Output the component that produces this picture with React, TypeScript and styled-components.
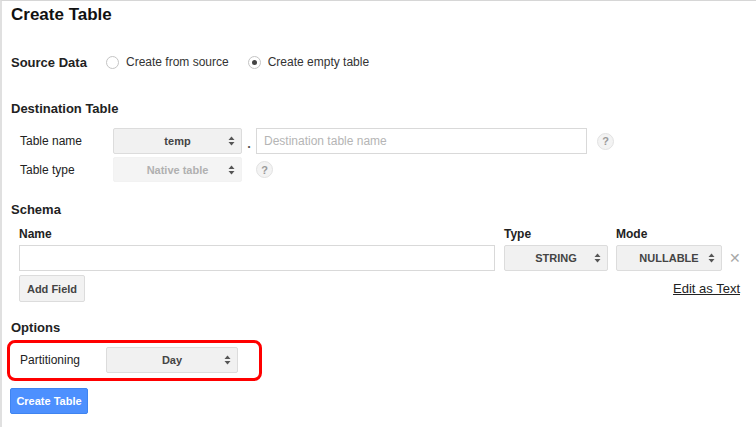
import React from "react";
import styled, { createGlobalStyle } from "styled-components";

const GlobalStyle = createGlobalStyle`
  html, body {
    margin: 0;
    padding: 0;
    background: #ffffff;
  }
  body {
    font-family: "Liberation Sans", Arial, sans-serif;
    color: #222222;
  }
`;

const Page = styled.div`
  width: 756px;
  height: 427px;
  box-sizing: border-box;
  border-top: 1px solid #d6d6d6;
  border-left: 2px solid #e0e0e0;
  display: flex;
  flex-direction: column;
  overflow: hidden;
`;

const Title = styled.h1`
  margin: 0;
  padding-left: 9px;
  font-size: 17px;
  line-height: 27px;
  font-weight: bold;
  color: #111111;
`;

const Heading = styled.h2<{ top: number }>`
  margin: ${({ top }) => top}px 0 0 0;
  padding-left: 9px;
  font-size: 13px;
  line-height: 18px;
  font-weight: bold;
  color: #222222;
`;

const SourceRow = styled.div`
  margin-top: 24px;
  padding-left: 9px;
  height: 20px;
  display: flex;
  align-items: center;
`;

const SourceLabel = styled.span`
  font-size: 13px;
  font-weight: bold;
  width: 95px;
`;

const RadioOption = styled.label`
  display: flex;
  align-items: center;
  gap: 7px;
  font-size: 12px;
  color: #333333;
  margin-right: 19px;
`;

const RadioCircle = styled.span<{ checked?: boolean }>`
  width: 13px;
  height: 13px;
  box-sizing: border-box;
  border-radius: 50%;
  border: 1px solid #c4c4c4;
  background: #ffffff;
  display: flex;
  align-items: center;
  justify-content: center;

  &::after {
    content: "";
    width: 5px;
    height: 5px;
    border-radius: 50%;
    background: ${({ checked }) => (checked ? "#444444" : "transparent")};
  }
`;

const FormRow = styled.div<{ top: number }>`
  margin-top: ${({ top }) => top}px;
  padding-left: 18px;
  display: flex;
  align-items: center;
`;

const FieldLabel = styled.span<{ width: number }>`
  width: ${({ width }) => width}px;
  font-size: 12px;
  color: #222222;
  flex-shrink: 0;
`;

const SelectBox = styled.div<{ width: number; height?: number; disabled?: boolean }>`
  position: relative;
  width: ${({ width }) => width}px;
  height: ${({ height }) => height ?? 26}px;
  box-sizing: border-box;
  border: 1px solid ${({ disabled }) => (disabled ? "#f2f2f2" : "#dcdcdc")};
  border-radius: 2px;
  background: ${({ disabled }) => (disabled ? "#f4f4f4" : "#f1f1f1")};
  color: ${({ disabled }) => (disabled ? "#b0b0b0" : "#444444")};
  font-size: 11px;
  font-weight: bold;
  display: flex;
  align-items: center;
  justify-content: center;
  flex-shrink: 0;
`;

const Arrows = styled.svg`
  position: absolute;
  right: 6px;
  top: 50%;
  transform: translateY(-50%);
`;

const Dot = styled.span`
  width: 14px;
  height: 26px;
  text-align: center;
  font-size: 13px;
  font-weight: bold;
  color: #555555;
  line-height: 32px;
  overflow: hidden;
`;

const TextInput = styled.div<{ width: number }>`
  width: ${({ width }) => width}px;
  height: 26px;
  box-sizing: border-box;
  border: 1px solid #d9d9d9;
  background: #ffffff;
  padding-left: 7px;
  display: flex;
  align-items: center;
  font-size: 12px;
  color: #b5b5b5;
  flex-shrink: 0;
`;

const HelpIcon = styled.span<{ gap: number }>`
  margin-left: ${({ gap }) => gap}px;
  width: 17px;
  height: 17px;
  box-sizing: border-box;
  border-radius: 50%;
  border: 1px solid #e2e2e2;
  background: #f3f3f3;
  color: #9a9a9a;
  font-size: 11px;
  font-weight: bold;
  display: flex;
  align-items: center;
  justify-content: center;
`;

const SchemaRow = styled.div<{ top: number }>`
  margin-top: ${({ top }) => top}px;
  padding-left: 17px;
  display: flex;
  align-items: center;
`;

const ColumnHeader = styled.span<{ width: number }>`
  width: ${({ width }) => width}px;
  font-size: 12px;
  line-height: 14px;
  font-weight: bold;
  color: #222222;
  flex-shrink: 0;
`;

const Spacer = styled.span<{ width: number }>`
  width: ${({ width }) => width}px;
  flex-shrink: 0;
`;

const RemoveIcon = styled.span`
  margin-left: 7px;
  font-size: 14px;
  color: #a8a8a8;
  line-height: 26px;
`;

const GrayButton = styled.button`
  width: 66px;
  height: 27px;
  box-sizing: border-box;
  border: 1px solid #dcdcdc;
  border-radius: 2px;
  background: #f2f2f2;
  color: #444444;
  font-family: inherit;
  font-size: 11px;
  font-weight: bold;
  padding: 0;
`;

const EditLink = styled.a`
  margin-left: auto;
  margin-right: 16px;
  font-size: 13px;
  color: #222222;
  text-decoration: underline;
`;

const Highlight = styled.div`
  margin: 3px 0 0 5px;
  width: 255px;
  height: 41px;
  box-sizing: border-box;
  border: 3px solid #ff0000;
  border-radius: 8px;
  padding: 4px 0 0 10px;
  display: flex;
  align-items: flex-start;
`;

const HighlightLabel = styled.span`
  width: 86px;
  font-size: 12px;
  line-height: 26px;
  color: #222222;
`;

const PrimaryButton = styled.button`
  margin: 7px 0 0 8px;
  width: 78px;
  height: 26px;
  box-sizing: border-box;
  border: 1px solid #3f84f0;
  border-radius: 2px;
  background: #4d90fe;
  color: #ffffff;
  font-family: inherit;
  font-size: 11px;
  font-weight: bold;
  padding: 0;
`;

function UpDown() {
  return (
    <Arrows width="7" height="10" viewBox="0 0 7 10">
      <path d="M3.5 0.5 L6.5 4 L0.5 4 Z" fill="#555" />
      <path d="M0.5 6 L6.5 6 L3.5 9.5 Z" fill="#555" />
    </Arrows>
  );
}

interface SelectProps {
  value: string;
  width: number;
  height?: number;
  disabled?: boolean;
}

function Select({ value, width, height, disabled }: SelectProps) {
  return (
    <SelectBox width={width} height={height} disabled={disabled}>
      {value}
      <UpDown />
    </SelectBox>
  );
}

export default function App() {
  return (
    <>
      <GlobalStyle />
      <Page>
        <Title>Create Table</Title>

        <SourceRow>
          <SourceLabel>Source Data</SourceLabel>
          <RadioOption>
            <RadioCircle />
            Create from source
          </RadioOption>
          <RadioOption>
            <RadioCircle checked />
            Create empty table
          </RadioOption>
        </SourceRow>

        <Heading top={28}>Destination Table</Heading>
        <FormRow top={10}>
          <FieldLabel width={93}>Table name</FieldLabel>
          <Select value="temp" width={129} />
          <Dot>.</Dot>
          <TextInput width={331}>Destination table name</TextInput>
          <HelpIcon gap={10}>?</HelpIcon>
        </FormRow>
        <FormRow top={3}>
          <FieldLabel width={93}>Table type</FieldLabel>
          <Select value="Native table" width={129} height={25} disabled />
          <HelpIcon gap={14}>?</HelpIcon>
        </FormRow>

        <Heading top={19}>Schema</Heading>
        <SchemaRow top={8}>
          <ColumnHeader width={485}>Name</ColumnHeader>
          <ColumnHeader width={112}>Type</ColumnHeader>
          <ColumnHeader width={60}>Mode</ColumnHeader>
        </SchemaRow>
        <SchemaRow top={4}>
          <TextInput width={476} />
          <Spacer width={9} />
          <Select value="STRING" width={104} />
          <Spacer width={8} />
          <Select value="NULLABLE" width={106} />
          <RemoveIcon>✕</RemoveIcon>
        </SchemaRow>
        <SchemaRow top={4}>
          <GrayButton>Add Field</GrayButton>
          <EditLink>Edit as Text</EditLink>
        </SchemaRow>

        <Heading top={17}>Options</Heading>
        <Highlight>
          <HighlightLabel>Partitioning</HighlightLabel>
          <Select value="Day" width={132} />
        </Highlight>

        <div>
          <PrimaryButton>Create Table</PrimaryButton>
        </div>
      </Page>
    </>
  );
}
